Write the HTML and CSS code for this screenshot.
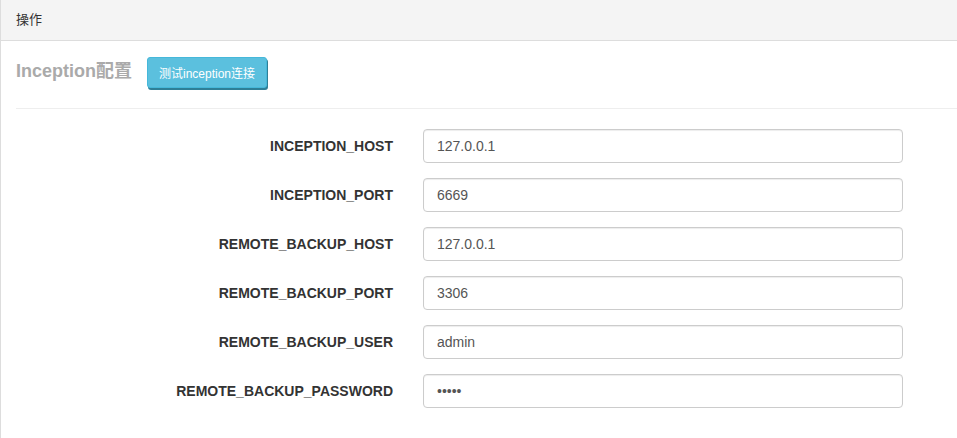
FILE: index.html
```html
<!DOCTYPE html>
<html lang="zh">
<head>
<meta charset="utf-8">
<title>Inception配置</title>
<link rel="stylesheet" href="styles.css">
</head>
<body>
<div class="panel">
  <div class="panel-heading">操作</div>
  <div class="panel-body">
    <div class="title-row">
      <h4 class="title">Inception配置</h4>
      <button class="btn-info" type="button">测试inception连接</button>
    </div>
    <hr class="divider">
    <form class="form">
      <div class="row">
        <label class="label">INCEPTION_HOST</label>
        <input class="input" type="text" value="127.0.0.1">
      </div>
      <div class="row">
        <label class="label">INCEPTION_PORT</label>
        <input class="input" type="text" value="6669">
      </div>
      <div class="row">
        <label class="label">REMOTE_BACKUP_HOST</label>
        <input class="input" type="text" value="127.0.0.1">
      </div>
      <div class="row">
        <label class="label">REMOTE_BACKUP_PORT</label>
        <input class="input" type="text" value="3306">
      </div>
      <div class="row">
        <label class="label">REMOTE_BACKUP_USER</label>
        <input class="input" type="text" value="admin">
      </div>
      <div class="row">
        <label class="label">REMOTE_BACKUP_PASSWORD</label>
        <input class="input" type="password" value="12345">
      </div>
    </form>
  </div>
</div>
</body>
</html>
```

FILE: styles.css
```css
html, body {
  margin: 0;
  padding: 0;
  background: #fff;
  font-family: "Liberation Sans", Arial, "Noto Sans CJK SC", sans-serif;
  color: #333;
}

.panel {
  border-left: 1px solid #ddd;
  min-height: 438px;
  box-sizing: border-box;
}

.panel-heading {
  height: 40px;
  background: #f4f4f4;
  border-bottom: 1px solid #ddd;
  padding-left: 15px;
  font-size: 13px;
  line-height: 40px;
  color: #333;
}

.panel-body {
  padding: 15px 0 15px 15px;
}

.title-row {
  display: flex;
  align-items: center;
  gap: 15px;
  height: 32px;
}

.title {
  margin: 0;
  font-size: 18px;
  font-weight: bold;
  color: #aaa;
  line-height: 1.1;
}

.btn-info {
  width: 120px;
  height: 31px;
  padding: 0;
  font-family: "Liberation Sans", Arial, "Noto Sans CJK SC", sans-serif;
  font-size: 12px;
  color: #fff;
  background: #5bc0de;
  border: 1px solid #46b8da;
  border-radius: 3px;
  box-shadow: 1px 2px 0 #2e7f97;
  cursor: pointer;
}

.divider {
  margin: 20px 0 20px 0;
  border: 0;
  border-top: 1px solid #eee;
  height: 0;
}

.form {
  display: flex;
  flex-direction: column;
  gap: 15px;
}

.row {
  display: flex;
  align-items: center;
}

.label {
  text-align: right;
  font-size: 14px;
  font-weight: bold;
  color: #333;
  padding-right: 30px;
  box-sizing: border-box;
  flex: none;
  width: 407px;
}

.input {
  width: 480px;
  height: 34px;
  box-sizing: border-box;
  padding: 6px 13px;
  font-family: "Liberation Sans", Arial, sans-serif;
  font-size: 14px;
  color: #555;
  border: 1px solid #ccc;
  border-radius: 4px;
  background: #fff;
  box-shadow: inset 0 1px 1px rgba(0,0,0,0.075);
  outline: none;
}
```
